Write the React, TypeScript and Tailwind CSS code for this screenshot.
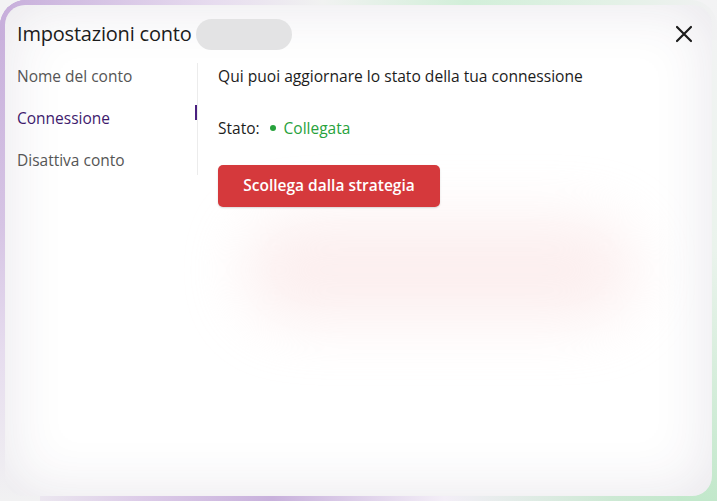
import React from "react";

export default function App() {
  return (
    <div
      className="relative h-[501px] w-[717px] overflow-hidden bg-[#f3f3f4]"
      style={{ fontFamily: "'Open Sans', 'Noto Sans', sans-serif" }}
    >
      {/* gradient frame */}
      <div className="absolute inset-0 rounded-[26px] bg-[linear-gradient(90deg,#c6acd9_0%,#e6dbef_30%,#f4f6f4_48%,#cfeed6_70%,#e9f4ec_100%)]" />
      <div className="absolute inset-x-0 bottom-0 h-[140px] bg-[linear-gradient(90deg,#f1f1f2_0%,#dccbe8_20%,#c8b1dc_38%,#f3eef7_62%,#cde9d4_85%,#bfe7c9_100%)]" />
      <div className="absolute right-0 top-0 h-full w-[40px] bg-[linear-gradient(180deg,#f3f3f4_0%,#eaf3ec_50%,#c2e8cb_100%)]" />
      <div className="absolute left-0 top-0 h-full w-[40px] rounded-tl-[26px] bg-[linear-gradient(180deg,#c7aedb_0%,#d6c4e4_45%,#e6dcee_70%,#f1f1f2_100%)]" />
      <div className="absolute left-0 top-0 h-[40px] w-full rounded-t-[26px] bg-[linear-gradient(90deg,#c7aedb_0%,#e7dcef_30%,#f1f2f1_45%,#d2efd9_65%,#e3f1e6_85%,#f1f1f2_100%)]" />

      {/* card */}
      <div className="absolute inset-[5px] overflow-hidden rounded-[20px] bg-white shadow-[inset_0_0_60px_rgba(60,40,80,0.12)]">
        <div className="pointer-events-none absolute left-[240px] top-[215px] h-[100px] w-[390px] rounded-full bg-[#f9dede] opacity-50 blur-[30px]" />
        <div className="relative flex flex-col">
          <div className="flex h-[58px] items-center pl-[12px] pr-[16px]">
            <span className="text-[20px] leading-none tracking-[-0.2px] text-[#1c1c1c]">Impostazioni conto</span>
            <span className="ml-[4px] h-[31px] w-[96px] rounded-full bg-[#e3e3e4]" />
            <button className="ml-auto flex h-[24px] w-[24px] items-center justify-center text-[#1c1c1c]">
              <svg width="18" height="18" viewBox="0 0 18 18" fill="none" stroke="currentColor" strokeWidth="2.2" strokeLinecap="round">
                <path d="M2 2L16 16M16 2L2 16" />
              </svg>
            </button>
          </div>
          <div className="flex">
            <div className="flex w-[192px] flex-col pl-[12px] pt-[3px]">
              <div className="h-[42px] text-[15.5px] leading-[20px] text-[#555555]">Nome del conto</div>
              <div className="h-[42px] text-[15.5px] leading-[20px] text-[#3e1a6d]">Connessione</div>
              <div className="h-[42px] text-[15.5px] leading-[20px] text-[#555555]">Disattiva conto</div>
            </div>
            <div className="relative w-px self-start h-[112px] bg-[#ececec]">
              <div className="absolute left-[-2px] top-[42px] h-[15px] w-[2px] bg-[#4a2080]" />
            </div>
            <div className="flex flex-col pl-[20px] pt-[3px]">
              <div className="text-[15.6px] leading-[20px] text-[#1c1c1c]">Qui puoi aggiornare lo stato della tua connessione</div>
              <div className="mt-[32px] flex items-center text-[15.5px] leading-[20px] text-[#1c1c1c]">
                <span>Stato:</span>
                <span className="ml-[10px] h-[6px] w-[6px] rounded-full bg-[#27a23c]" />
                <span className="ml-[8px] text-[#27a23c]">Collegata</span>
              </div>
              <button className="mt-[27px] flex h-[42px] w-[222px] items-center justify-center rounded-[5px] bg-[#d5393c] text-[15.5px] font-semibold text-white shadow-[0_1px_2px_rgba(0,0,0,0.15)]">
                Scollega dalla strategia
              </button>
            </div>
          </div>
        </div>
      </div>
    </div>
  );
}
